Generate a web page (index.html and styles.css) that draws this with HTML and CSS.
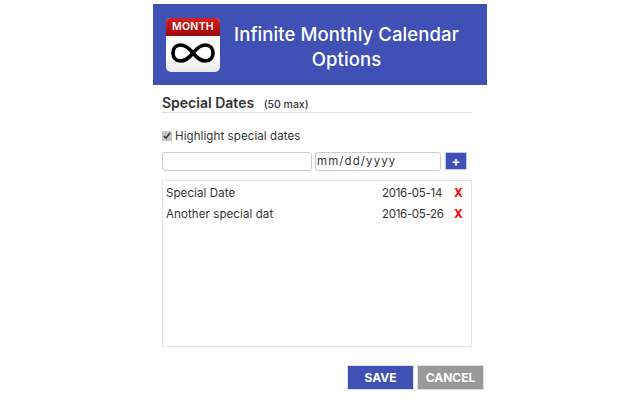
FILE: index.html
```html
<!DOCTYPE html>
<html lang="en">
<head>
    <meta charset="UTF-8">
    <title>Infinite Monthly Calendar Options</title>
    <link rel="stylesheet" href="styles.css">
</head>
<body>
    <div class="options">
        <div class="header">
            <div class="logo">
                <div class="logo-top">MONTH</div>
                <div class="logo-bottom">
                    <svg width="44" height="22" viewBox="0 0 44 22">
                        <path d="M22 11C18 6 14 3 9.500 3C5 3 2 6.500 2 11C2 15.500 5 19 9.500 19C14 19 18 16 22 11C26 6 30 3 34.500 3C39 3 42 6.500 42 11C42 15.500 39 19 34.500 19C30 19 26 16 22 11Z" fill="none" stroke="#000" stroke-width="3.700"/>
                    </svg>
                </div>
            </div>
            <h1>Infinite Monthly Calendar Options</h1>
        </div>
        <div class="content">
            <h2>Special Dates <small>(50 max)</small></h2>
            <label class="highlight">
                <input type="checkbox" checked>
                Highlight special dates
            </label>
            <div class="add-row">
                <input type="text" class="name-input">
                <div class="date-input">mm/dd/yyyy</div>
                <button class="add">+</button>
            </div>
            <ul class="dates">
                <li>
                    <span class="date-name">Special Date</span>
                    <span class="date-value">2016-05-14</span>
                    <span class="remove">X</span>
                </li>
                <li>
                    <span class="date-name">Another special dat</span>
                    <span class="date-value">2016-05-26</span>
                    <span class="remove">X</span>
                </li>
            </ul>
        </div>
        <div class="actions">
            <button class="save">SAVE</button>
            <button class="cancel">CANCEL</button>
        </div>
    </div>
</body>
</html>
```

FILE: styles.css
```css
* {
    box-sizing: border-box;
}
body {
    margin: 0;
    background: #fff;
    color: #333;
    font-family: Inter, "Open Sans", sans-serif;
}
.options {
    width: 334px;
    margin: 4px auto 0;
}
.header {
    display: flex;
    align-items: center;
    height: 81px;
    padding: 0 14px 0 13px;
    background: #3f51b5;
}
.logo {
    flex: none;
    width: 54px;
    height: 54px;
    border-radius: 5px;
    overflow: hidden;
    background: linear-gradient(#fff 70%, #e8e8e8);
}
.logo-top {
    height: 18px;
    background: linear-gradient(#d81e1e, #9c0b0b);
    color: #fff;
    font-size: 10.500px;
    font-weight: 600;
    letter-spacing: 0.300px;
    line-height: 17px;
    text-align: center;
}
.logo-bottom {
    display: flex;
    justify-content: center;
    padding-top: 6px;
}
h1 {
    flex: 1;
    margin: 0;
    padding-top: 5px;
    color: #fff;
    font-size: 18.500px;
    font-weight: 500;
    letter-spacing: 0.100px;
    line-height: 25px;
    text-align: center;
}
.content {
    padding: 0 15px 0 9px;
}
h2 {
    margin: 10px 0 0;
    padding-bottom: 1px;
    border-bottom: 1px solid #ddd;
    font-size: 14px;
    font-weight: 600;
    line-height: 16px;
}
h2 small {
    margin-left: 6px;
    font-size: 10.500px;
    font-weight: 500;
    line-height: 1;
}
.highlight {
    display: flex;
    align-items: center;
    margin-top: 15px;
    font-size: 11.500px;
    letter-spacing: 0.100px;
    line-height: 16px;
}
.highlight input {
    width: 10px;
    height: 10px;
    margin: 0 3px 0 0;
    accent-color: #c4c4c4;
}
.add-row {
    display: flex;
    align-items: flex-start;
    margin-top: 8px;
}
.name-input,
.date-input {
    height: 19px;
    border: 1px solid #ccc;
    border-radius: 3px;
    background: #fff;
}
.name-input {
    width: 150px;
}
.date-input {
    width: 126px;
    margin-left: 3px;
    padding-left: 1px;
    font-size: 11.500px;
    letter-spacing: 1.100px;
    line-height: 17px;
}
.add {
    width: 22px;
    height: 18px;
    margin-left: 4px;
    padding: 0;
    border: 1px solid #c5cae9;
    background: #3f51b5;
    color: #fff;
    font-family: inherit;
    font-size: 13px;
    font-weight: 700;
    line-height: 14px;
}
.dates {
    height: 167px;
    margin: 9px 0 0;
    padding: 1px 0 0;
    border: 1px solid #e4e4e4;
    list-style: none;
}
.dates li {
    display: flex;
    align-items: center;
    height: 21px;
    padding-left: 3px;
    font-size: 11.500px;
    letter-spacing: 0.100px;
}
.date-name {
    width: 216px;
}
.date-value {
    width: 72px;
    letter-spacing: -0.300px;
}
.remove {
    color: #f00;
    font-size: 12px;
    font-weight: 700;
}
.actions {
    display: flex;
    justify-content: flex-end;
    gap: 3px;
    margin-top: 18px;
    padding-right: 3px;
}
.actions button {
    width: 67px;
    height: 25px;
    padding: 0;
    border: 1px solid #ddd;
    color: #fff;
    font-family: inherit;
    font-size: 12px;
    font-weight: 700;
}
.save {
    background: #3f51b5;
}
.cancel {
    background: #999;
}
```
